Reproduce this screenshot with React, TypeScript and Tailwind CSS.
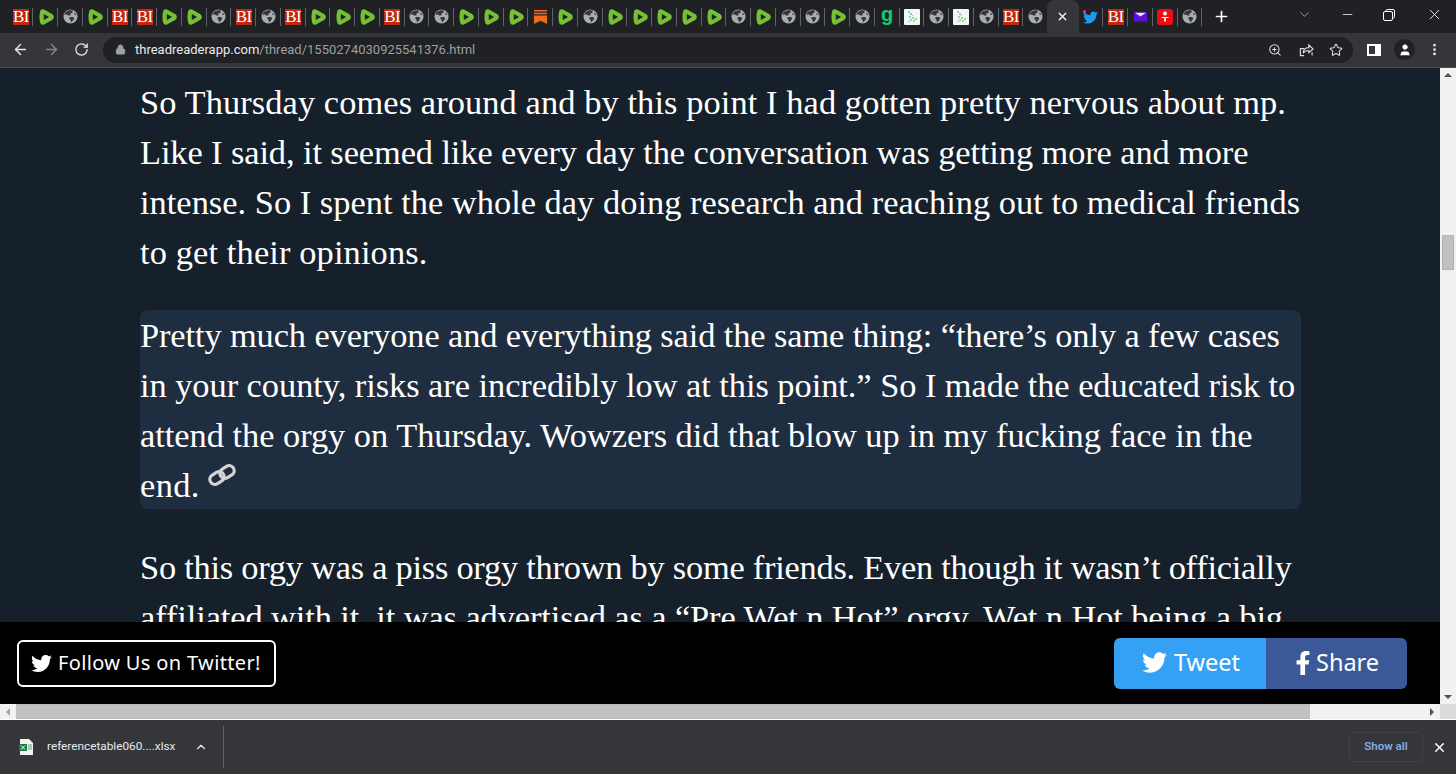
import React from "react";
import { ArrowLeft, ArrowRight, RotateCw, Lock, ZoomIn, Star, X, ChevronDown, ChevronUp, Minus, Plus, User, MoreVertical } from "lucide-react";
import { FaTwitter, FaFacebookF } from "react-icons/fa";

const Globe = () => (
  <svg viewBox="0 0 16 16" className="w-[15px] h-[15px]">
    <circle cx="8" cy="8" r="7.5" fill="#a9acb2" />
    <path d="M3 3.2 C5 1.5 8 1 10.5 1.6 L10 4 L7.8 5 L8 7 L5.5 7 L4 5.5 L1.6 6.5 C1.8 5 2.2 4 3 3.2Z" fill="#35363a" />
    <path d="M7.5 8.5 L11 8.5 L12 10.5 L10 13 L8.5 14.5 L8.2 12 L6.5 10Z M12 3.5 L14.5 6 L12.5 6.5Z" fill="#35363a" />
  </svg>
);
const Play = () => (
  <svg viewBox="0 0 16 16" className="w-[16px] h-[16px]">
    <path d="M2.2 2.2 C2.6 0.4 4.4 -0.2 6 0.5 L14 5 C16.4 6.4 16.4 9.6 14 11 L6 15.5 C4.4 16.2 2.6 15.6 2.2 13.8 C1.2 10 1.2 6 2.2 2.2Z" fill="#76c035" />
    <path d="M6.2 5.6 L10.4 8 L6.2 10.4Z" fill="#202124" stroke="#202124" strokeWidth="0.8" strokeLinejoin="round" />
  </svg>
);
const BI = () => (
  <div className="w-[16px] h-[16px] bg-[#c0280f] flex items-center justify-center text-white text-[17px] leading-none tracking-[-0.5px] font-['Liberation_Serif',serif]">BI</div>
);
const Bookmark = () => (
  <svg viewBox="0 0 16 16" className="w-[15px] h-[16px]">
    <path d="M1 0.5H15V2H1Z M1 3.5H15V5H1Z" fill="#f26a1b" />
    <path d="M1 6.5H15V15.5L8 12L1 15.5Z" fill="#f26a1b" />
  </svg>
);
const G = () => (
  <div className="w-[16px] h-[16px] flex items-center justify-center text-[#0ccf6e] font-bold text-[20px] leading-none pb-[5px] font-['Liberation_Sans',sans-serif]">g</div>
);
const QR = () => (
  <svg viewBox="0 0 16 16" className="w-[16px] h-[16px]">
    <rect x="0" y="0" width="16" height="16" rx="1" fill="#f4f6f6" />
    <path d="M4 2h2v2H4z M6 4h2v2H6z M5 7h2v2H5z M8 6h1v1H8z" fill="#7fd0de" />
    <path d="M8 8h2v2H8z M11 9h2v2h-2z M6 10h2v2H6z M9 11h2v2H9z M4 12h2v1H4z" fill="#96d8a0" />
  </svg>
);
const Tw = () => (
  <div className="relative w-[16px] h-[16px] flex items-center justify-center">
    <FaTwitter className="text-[#1d9bf0] text-[15px] mt-[2px]" />
    <span className="absolute top-[1px] left-0 w-[3px] h-[3px] rounded-full bg-[#f0308c]" />
  </div>
);
const Mail = () => (
  <svg viewBox="0 0 16 16" className="w-[15px] h-[16px]">
    <rect x="1" y="3" width="14" height="10" fill="#5a10d8" />
    <path d="M2 3.5H14L8 7.5Z" fill="#e8e0f8" />
  </svg>
);
const Red = () => (
  <div className="w-[16px] h-[16px] rounded-[3px] bg-[#ee0c14] flex items-center justify-center">
    <svg viewBox="0 0 16 16" className="w-[14px] h-[14px]">
      <circle cx="8" cy="4" r="2.2" fill="#fff" />
      <path d="M4 8H12V9.2H9V13H7V9.2H4Z" fill="#fff" />
    </svg>
  </div>
);

const seqA = [BI, Play, Globe, Play, BI, BI, Play, Play, Globe, BI, Globe, BI, Play, Play, Play, BI, Globe, Globe, Play, Play, Play, Bookmark, Play, Globe, Play, Play, Play, Play, Play, Globe, Play, Globe, Globe, Play, Globe, G, QR, Globe, QR, Globe, BI, Globe];
const seqB = [Tw, BI, Mail, Red, Globe];

const Tab = ({ I, last }: { I: React.ComponentType; last?: boolean }) => (
  <div className="w-[24.76px] h-[33px] shrink-0 flex items-center justify-center relative">
    <I />
    {!last && <span className="absolute right-0 top-[8px] h-[18px] w-px bg-[#5f6368]" />}
  </div>
);

const Page = () => (
  <div className="relative flex-1 min-w-0 overflow-hidden bg-[#15202b] text-white font-['Liberation_Serif',serif] text-[34.4px] leading-[50px] pt-[9px]">
    <div className="w-[1161px] ml-[140px]">
      <div className="whitespace-nowrap">
        <p className="tracking-[0.09px]">So Thursday comes around and by this point I had gotten pretty nervous about mp.</p>
        <p className="tracking-[-0.1px]">Like I said, it seemed like every day the conversation was getting more and more</p>
        <p className="tracking-[0.02px]">intense. So I spent the whole day doing research and reaching out to medical friends</p>
        <p className="tracking-[0.13px]">to get their opinions.</p>
      </div>
      <div className="relative mt-[33px] h-[199px] bg-[#1f2d40] rounded-lg whitespace-nowrap">
        <p className="tracking-[-0.11px]">Pretty much everyone and everything said the same thing: “there’s only a few cases</p>
        <p className="tracking-[-0.046px]">in your county, risks are incredibly low at this point.” So I made the educated risk to</p>
        <p className="tracking-[-0.025px]">attend the orgy on Thursday. Wowzers did that blow up in my fucking face in the</p>
        <p className="tracking-[0.4px]">end.</p>
        <svg viewBox="0 0 28 22" className="absolute left-[68px] top-[154px] w-[28px] h-[22px]" fill="none" stroke="#d4d4d4" strokeWidth="3.2">
          <rect x="1.5" y="9" width="15" height="10" rx="5" transform="rotate(-32 9 14)" />
          <rect x="11.5" y="3" width="15" height="10" rx="5" transform="rotate(-32 19 8)" />
        </svg>
      </div>
      <div className="mt-[33px] whitespace-nowrap">
        <p className="tracking-[-0.244px]">So this orgy was a piss orgy thrown by some friends. Even though it wasn’t officially</p>
        <p className="tracking-[-0.094px]">affiliated with it, it was advertised as a “Pre Wet n Hot” orgy. Wet n Hot being a big</p>
      </div>
    </div>
    <div className="absolute left-0 right-0 bottom-0 h-[82px] bg-black flex items-center justify-between pl-[17px] pr-[33px] font-['Noto_Sans',sans-serif]">
      <div className="w-[259px] h-[47px] border-2 border-white rounded-md flex items-center pl-[12px] gap-[6px] text-[20px] leading-none">
        <FaTwitter className="text-[21px]" />
        <span className="tracking-[0.35px]">Follow Us on Twitter!</span>
      </div>
      <div className="flex h-[51px] rounded-md overflow-hidden text-[23.5px] leading-none">
        <div className="w-[152px] bg-[#35a1f4] flex items-center pl-[28px] gap-[7px] pb-[1px]"><FaTwitter className="text-[25px]" /><span>Tweet</span></div>
        <div className="w-[141px] bg-[#3b5998] flex items-center pl-[25px] gap-[1px] pb-[1px]"><FaFacebookF className="text-[24px]" /><span>Share</span></div>
      </div>
    </div>
  </div>
);

export default function App() {
  return (
    <div className="w-[1456px] h-[774px] overflow-hidden flex flex-col bg-[#202124] font-['Liberation_Sans',sans-serif] text-white">
      <div className="h-[33px] shrink-0 flex items-center pl-[8.6px] bg-[#202124]">
        {seqA.map((I, i) => <Tab key={i} I={I} last={i === seqA.length - 1} />)}
        <div className="w-[32px] -ml-[1.5px] pr-[1px] h-[33px] shrink-0 bg-[#35363a] rounded-t-lg flex items-center justify-center">
          <X size={13} strokeWidth={2.4} className="text-white" />
        </div>
        {seqB.map((I, i) => <Tab key={i} I={I} />)}
        <Plus size={17} strokeWidth={2.4} className="ml-[11px] text-white" />
        <div className="ml-auto flex items-center h-full pb-[4px]">
          <ChevronDown size={15} strokeWidth={1.2} className="text-[#bdc1c6] mr-[28px]" />
          <Minus size={15} strokeWidth={1.2} className="mr-[28px]" />
          <svg viewBox="0 0 12 12" className="w-[12px] h-[12px] mr-[31px]" fill="none" stroke="#fff" strokeWidth="1"><rect x="0.5" y="2.5" width="9" height="9" rx="1.5" /><path d="M3 2.5V2a1.5 1.5 0 0 1 1.5-1.5H10A1.5 1.5 0 0 1 11.5 2v5.5A1.5 1.5 0 0 1 10 9h-.5" /></svg>
          <X size={17} strokeWidth={1.2} className="mr-[13px]" />
        </div>
      </div>
      <div className="h-[35px] shrink-0 bg-[#35363a] flex items-center border-b border-[#4a4d52] pb-[1px]">
        <ArrowLeft size={17} strokeWidth={2} className="ml-[12px] text-[#e8eaed]" />
        <ArrowRight size={17} strokeWidth={2} className="ml-[14px] text-[#83868b]" />
        <RotateCw size={15} strokeWidth={2} className="ml-[14px] text-[#e8eaed]" />
        <div className="ml-[14px] w-[1250px] h-[26px] rounded-full bg-[#202124] flex items-center pl-[12px]">
          <Lock size={11} fill="#9aa0a6" className="text-[#9aa0a6]" />
          <span className="ml-[9px] text-[13px] leading-none text-[#e8eaed] font-['Roboto',sans-serif]">threadreaderapp.com<span className="text-[#9aa0a6]">/thread/1550274030925541376.html</span></span>
          <div className="ml-auto flex items-center pr-[10px] text-[#dadce0]">
            <ZoomIn size={14} strokeWidth={1.8} className="mr-[16px]" />
            <svg viewBox="0 0 16 16" className="w-[16px] h-[15px] mr-[15px]" fill="none" stroke="#dadce0" strokeWidth="1.2"><path d="M6 14.5H2V7h4" /><path d="M14.5 14.5V11" /><path d="M5 12C5 8 7.5 6 11 6V3l4.5 4.5L11 11.5V9C8.5 9 6 10 5 12Z" /></svg>
            <Star size={14} strokeWidth={1.8} />
          </div>
        </div>
        <svg viewBox="0 0 14 14" className="w-[14px] h-[14px] ml-[14px]"><rect x="0" y="1" width="14" height="12" fill="#fff" /><rect x="2" y="3" width="6" height="8" fill="#35363a" /></svg>
        <div className="ml-[13px] w-[21px] h-[21px] rounded-full bg-[#202124] flex items-center justify-center">
          <User size={14} fill="#fff" strokeWidth={1} />
        </div>
        <MoreVertical size={15} strokeWidth={2.4} className="ml-[12px] text-[#e8eaed]" />
      </div>
      <div className="h-[636px] shrink-0 flex">
        <Page />
        <div className="w-[16px] bg-[#f1f1f1] flex flex-col items-center">
          <span className="mt-[5px] w-0 h-0 border-l-[4px] border-r-[4px] border-b-[4px] border-transparent border-b-[#505050]" />
          <span className="mt-[158px] w-[12px] h-[35px] bg-[#c1c1c1] border border-[#b4b4b4]" />
          <span className="mt-auto mb-[5px] w-0 h-0 border-l-[4px] border-r-[4px] border-t-[4px] border-transparent border-t-[#505050]" />
        </div>
      </div>
      <div className="h-[15px] shrink-0 flex items-stretch bg-[#f1f1f1]">
        <div className="w-[16px] flex items-center justify-center"><span className="w-0 h-0 border-t-[4px] border-b-[4px] border-r-[4px] border-transparent border-r-[#a3a3a3]" /></div>
        <div className="w-[1294px] bg-[#c1c1c1] border-y border-[#b9b9b9]" />
        <div className="flex-1 flex items-center justify-end pr-[6px]"><span className="w-0 h-0 border-t-[4px] border-b-[4px] border-l-[4px] border-transparent border-l-[#505050]" /></div>
        <div className="w-[16px] bg-[#dcdcdc]" />
      </div>
      <div className="h-[55px] shrink-0 border-t border-white bg-[#35363a] flex items-center">
        <svg viewBox="0 0 14 16" className="w-[14px] h-[16px] ml-[19px]">
          <path d="M1 0H10L14 4V16H1Z" fill="#f1f3f4" />
          <rect x="0" y="5" width="8" height="7" fill="#1d7a45" />
          <path d="M9 6h4M9 8h4M9 10h4" stroke="#4caf6e" strokeWidth="1" />
          <path d="M2 6.5L6 10.5M6 6.5L2 10.5" stroke="#fff" strokeWidth="1" />
        </svg>
        <span className="ml-[14px] text-[11.8px] leading-none text-[#e8eaed] font-['Roboto',sans-serif] whitespace-nowrap">referencetable060....xlsx</span>
        <ChevronUp size={14} strokeWidth={2} className="ml-[19px] text-[#e8eaed]" />
        <span className="ml-[15px] h-[42px] w-px bg-[#5f6368]" />
        <div className="ml-auto w-[74px] h-[30px] rounded border border-[#3f4044] flex items-center justify-center text-[11.5px] font-medium text-[#8ab4f8] font-['Roboto',sans-serif]">Show all</div>
        <X size={15} strokeWidth={2.4} className="ml-[9px] mr-[9px] text-white" />
      </div>
    </div>
  );
}
